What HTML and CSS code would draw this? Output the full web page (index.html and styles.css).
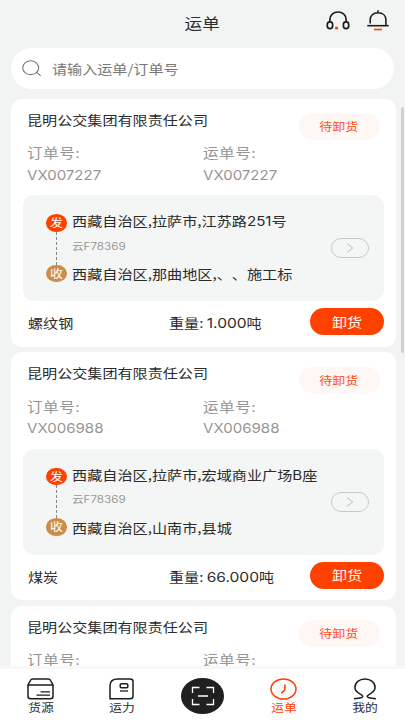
FILE: index.html
```html
<!DOCTYPE html>
<html lang="zh-CN">
<head>
<meta charset="utf-8">
<title>运单</title>
<link rel="stylesheet" href="styles.css">
</head>
<body>
<div class="app">
  <header class="top">
    <h1 class="title"><span class="t">运单</span></h1>
    <div class="actions">
      <svg width="24" height="21" viewBox="0 0 24 21" fill="none" stroke="#1d1f1f" stroke-width="1.700">
        <path d="M3.900 12V9.500C3.900 5 7.300 2 12 2s8.100 3 8.100 7.500V12"/>
        <rect x="1.300" y="11.800" width="5.300" height="6.800" rx="2.600"/>
        <rect x="17.400" y="11.800" width="5.300" height="6.800" rx="2.600"/>
        <circle cx="10.500" cy="18" r="1.600" fill="#ff4100" stroke="none"/>
      </svg>
      <svg width="22" height="21" viewBox="0 0 22 21" fill="none" stroke="#1d1f1f" stroke-width="1.600">
        <path d="M3.200 13.500V9.800C3.200 5.700 6 2.800 11 2.800s7.900 2.900 7.900 7v6.200M11 .2v2.600"/>
        <path d="M.3 15.700h21.400"/>
        <path d="M7 19.500h8" stroke="#ff4100"/>
      </svg>
    </div>
  </header>

  <div class="search">
    <svg width="20" height="17" viewBox="0 0 20 17" fill="none" stroke="#777" stroke-width="1.100">
      <ellipse cx="8.700" cy="7.700" rx="8" ry="6.900"/>
      <path d="M14.700 12.400l4 3.500"/>
    </svg>
    <span class="t">请输入运单/订单号</span>
  </div>

  <main class="list">
    <section class="card">
      <div class="head"><span class="t company">昆明公交集团有限责任公司</span><span class="tag"><span class="t">待卸货</span></span></div>
      <div class="numbers">
        <div><span class="t label">订单号:</span><span class="t num">VX007227</span></div>
        <div><span class="t label">运单号:</span><span class="t num">VX007227</span></div>
      </div>
      <div class="route">
        <div class="rail"><i class="dot from"><span class="t">发</span></i><i class="dash"></i><i class="dot to"><span class="t">收</span></i></div>
        <div class="stops"><span class="t">西藏自治区,拉萨市,江苏路<b>251</b>号</span><span class="t plate">云<b>F78369</b></span><span class="t">西藏自治区,那曲地区,<em>、</em><em>、</em>施工标</span></div>
        <span class="go"><svg width="8" height="10" viewBox="0 0 8 10" fill="none" stroke="#bbb"><path d="M1 .7l5.800 4.300L1 9.300"/></svg></span>
      </div>
      <div class="foot"><span class="t goods">螺纹钢</span><span class="t weight">重量: <b>1.000</b>吨</span><button class="btn"><span class="t">卸货</span></button></div>
    </section>

    <section class="card">
      <div class="head"><span class="t company">昆明公交集团有限责任公司</span><span class="tag"><span class="t">待卸货</span></span></div>
      <div class="numbers">
        <div><span class="t label">订单号:</span><span class="t num">VX006988</span></div>
        <div><span class="t label">运单号:</span><span class="t num">VX006988</span></div>
      </div>
      <div class="route">
        <div class="rail"><i class="dot from"><span class="t">发</span></i><i class="dash"></i><i class="dot to"><span class="t">收</span></i></div>
        <div class="stops"><span class="t">西藏自治区,拉萨市,宏域商业广场<b>B</b>座</span><span class="t plate">云<b>F78369</b></span><span class="t">西藏自治区,山南市,县城</span></div>
        <span class="go"><svg width="8" height="10" viewBox="0 0 8 10" fill="none" stroke="#bbb"><path d="M1 .7l5.800 4.300L1 9.300"/></svg></span>
      </div>
      <div class="foot"><span class="t goods">煤炭</span><span class="t weight">重量: <b>66.000</b>吨</span><button class="btn"><span class="t">卸货</span></button></div>
    </section>

    <section class="card">
      <div class="head"><span class="t company">昆明公交集团有限责任公司</span><span class="tag"><span class="t">待卸货</span></span></div>
      <div class="numbers">
        <div><span class="t label">订单号:</span></div>
        <div><span class="t label">运单号:</span></div>
      </div>
    </section>
    <i class="scrollbar"></i>
  </main>

  <nav class="tabs">
    <a class="tab">
      <svg width="27" height="22" viewBox="0 0 27 22" fill="none" stroke="#1d1f1f" stroke-width="1.500">
        <path d="M1 7v11.300q0 2.500 2.800 2.500h19.400q2.800 0 2.800-2.500V7L23.600 2.500Q23.100 1 21 1H6Q3.900 1 3.400 2.500L1 7h25"/>
        <path d="M13.500 13.800h9.500M9.500 17.200h13.500" stroke-width="1.300"/>
      </svg>
      <span class="t">货源</span>
    </a>
    <a class="tab">
      <svg width="25" height="22" viewBox="0 0 25 22" fill="none" stroke="#1d1f1f" stroke-width="1.500">
        <path d="M1 20.800V7.500Q1 1 9 1h12.200q2.800 0 2.800 2.500v14.800q0 2.500-2.800 2.500z"/>
        <rect x="11.200" y="5.700" width="7.600" height="4" rx="1.300"/>
        <path d="M11 13h8" stroke-width="1.300"/>
      </svg>
      <span class="t">运力</span>
    </a>
    <a class="scan">
      <svg width="24" height="20" viewBox="0 0 24 20" fill="none" stroke="#fff" stroke-width="1.300">
        <path d="M8.500 1.500H1.500V7M15.500 1.500h7V7M1.500 13v5.500h7M22.500 13v5.500h-7M7 10h10"/>
      </svg>
    </a>
    <a class="tab active">
      <svg width="27" height="22" viewBox="0 0 27 22" fill="none" stroke="#ff4100" stroke-width="1.500">
        <ellipse cx="13.500" cy="11" rx="12.500" ry="10"/>
        <path d="M14.900 6.500v4.800q0 1.200-3.600 3.700" stroke-width="1.600"/>
      </svg>
      <span class="t">运单</span>
    </a>
    <a class="tab">
      <svg width="24" height="22" viewBox="0 0 24 22" fill="none" stroke="#1d1f1f" stroke-width="1.500">
        <path d="M1 20.800q5-.3 7.600-1.300 2.400-1.100-.2-2.700C5 15 1.900 13 1.900 9.500 1.900 4.600 6.200 1 12 1s10.100 3.600 10.100 8.500c0 3.500-3.100 5.500-6.500 7.300q-2.600 1.600-.2 2.700 2.600 1 7.600 1.300"/>
      </svg>
      <span class="t">我的</span>
    </a>
  </nav>
</div>
</body>
</html>
```
FILE: styles.css
```css
* { box-sizing: border-box; }
body { margin: 0; font-family: "Noto Sans CJK SC", sans-serif; color: #2b2b2b; }
i, em { font-style: normal; }
em { display: inline-block; width: 1em; }
b { font-family: Inter, sans-serif; font-weight: 400; }

.app { width: 405px; height: 720px; display: flex; flex-direction: column; overflow: hidden; background: #f2f4f4; }

/* Wide lettering: every label is stretched horizontally from its own origin. */
.t { display: inline-block; white-space: nowrap; transform: scaleX(1.160); transform-origin: left center; }

.top { height: 48px; flex: none; display: grid; grid-template-columns: 1fr auto 1fr; align-items: start; }
.title { grid-column: 2; margin: 10px 0 0; font-size: 15.200px; line-height: 24px; font-weight: 400; }
.title .t, .tag .t, .btn .t, .tab .t, .dot .t { transform-origin: center; }
.actions { display: flex; justify-content: flex-end; gap: 17px; padding: 10px 16px 0 0; }
.actions svg { display: block; }

.search { flex: none; height: 41px; margin: 0 11px; padding: 0 0 1px 11px; border-radius: 21px; background: #fff; display: flex; align-items: center; gap: 9.500px; font-size: 13px; color: #777; }

.list { position: relative; flex: 1; min-height: 0; overflow: hidden; padding: 9.500px 9px 0 11px; display: flex; flex-direction: column; gap: 5.500px; }
.card { flex: none; height: 248px; padding: 0 12.500px 0 12px; border-radius: 11px; background: #fff; }
.head { height: 43.500px; padding: 14.500px 4px 0 4px; display: flex; justify-content: space-between; align-items: flex-start; }
.company { margin-top: -.5px; font-size: 13px; line-height: 14px; }
.tag { width: 81px; height: 26.500px; border-radius: 14px; background: #fff7f3; color: #ff4f18; font-size: 11.200px; display: flex; align-items: center; justify-content: center; }

.numbers { height: 53px; padding-left: 3.500px; display: grid; grid-template-columns: 176px 1fr; color: #969696; }
.numbers div { display: flex; flex-direction: column; align-items: flex-start; }
.label { font-size: 13.400px; line-height: 21px; letter-spacing: .5px; }
.num { margin-top: 1.500px; font: 13.700px/21px Inter, sans-serif; transform: scaleX(1.100); }

.route { height: 106px; padding: 0 14.500px 0 23px; border-radius: 11px; background: #f4f6f6; display: flex; align-items: center; }
.rail { width: 20.500px; height: 68px; margin-right: 5px; display: flex; flex-direction: column; align-items: center; }
.dot { flex: none; width: 20.500px; height: 17.500px; border-radius: 50%; color: #fff; font-size: 11.200px; line-height: 16.500px; text-align: center; }
.from { background: #ff4100; }
.to { background: #cb8d4b; }
.dash { flex: 1; border-left: 1px dashed #888; }
.stops { flex: 1; height: 70px; display: flex; flex-direction: column; justify-content: space-between; align-items: flex-start; font-size: 13.050px; line-height: 18px; }
.stops .t { margin-top: -1px; }
.stops .plate { margin-top: -5px; font-size: 10px; line-height: 14px; color: #999; }
.go { width: 38.500px; height: 20px; border: 1px solid #c8c8c8; border-radius: 10px; display: flex; align-items: center; justify-content: center; }

.foot { height: 41px; display: grid; grid-template-columns: 141px 1fr 73.500px; padding: 0 0 0 5px; align-items: center; font-size: 13px; }
.foot > .t { margin-top: 2px; }
.foot b { font-size: 13.400px; }
.btn { width: 73.500px; height: 27px; padding: 0; border: 0; border-radius: 14px; background: #ff4100; color: #fff; font: 13px/26px "Noto Sans CJK SC", sans-serif; }

.scrollbar { position: absolute; right: 1px; top: 18px; width: 3px; height: 246px; border-radius: 2px; background: #d0d3d3; }

.tabs { flex: none; height: 54px; padding-top: 9px; border-top: 3px solid #f7f8f8; background: #fff; display: grid; grid-template-columns: repeat(5, 81px); justify-items: center; align-items: start; }
.tab { display: flex; flex-direction: column; align-items: center; font-size: 11px; line-height: 15px; }
.tab svg { display: block; }
.active { color: #ff4100; }
.scan { width: 43.500px; height: 36px; border-radius: 50%; background: #202020; display: flex; align-items: center; justify-content: center; }
```
